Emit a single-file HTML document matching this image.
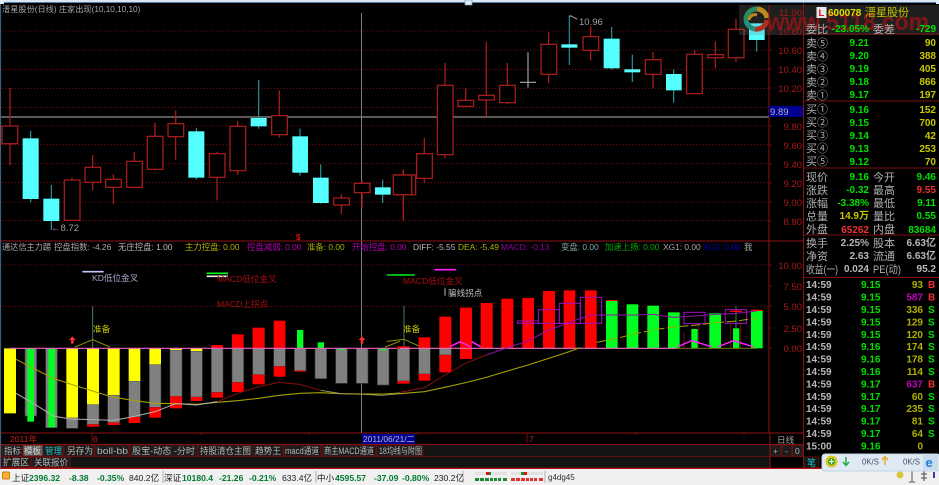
<!DOCTYPE html>
<html><head><meta charset="utf-8"><style>
html,body{margin:0;padding:0;background:#000;width:939px;height:485px;overflow:hidden}
svg{display:block;filter:blur(.3px)}
text{font-family:"Liberation Sans","Noto Sans CJK SC",sans-serif}
.l{font-size:11px;fill:#b0b0b0}
.n{font-size:10px;font-weight:bold}
.gr{fill:#00e000}.y{fill:#c8c800}.r{fill:#f03030}
.t{font-size:10px;font-weight:bold;fill:#b8b8b8}
.lg{font-size:8.4px}
.ax{font-size:9.5px;fill:#a81818;text-anchor:end}
.tb{font-size:9px;fill:#b8b8b8}
.st{font-size:8.6px;font-weight:bold;fill:#007a30}
.sk{font-size:8.6px;fill:#202020}
</style></head><body>
<svg width="939" height="485" viewBox="0 0 939 485" xmlns="http://www.w3.org/2000/svg">
<rect width="939" height="485" fill="#000"/>
<!-- upper dotted grid -->
<path d="M2 31H769M2 50H769M2 69.3H769M2 88.3H769M2 107.3H769M2 126H769M2 144.7H769M2 163.7H769M2 182.7H769M2 202H769M2 220.7H769" stroke="#8a1010" stroke-width=".8" stroke-dasharray="1.2 2"/>
<path d="M0 117H769" stroke="#909090" stroke-width="1.3"/>
<path d="M361.5 13V433" stroke="#808080" stroke-width="1"/>
<!-- candles left -->
<g transform="scale(.33333)">
<g stroke="#a81c1c" stroke-width="3.8" fill="none">
<path d="M30 264V495M216 533V661M278 465V570M340 522V612M403 456V562M465 369V512M527 332V479M651 456V601M713 363V524M838 271V412M1024 583V642M1086 540V626M1210 508V662"/>
<g fill="#000"><rect x="6" y="378" width="47" height="53"/><rect x="193" y="540" width="47" height="121"/><rect x="255" y="502" width="47" height="45"/><rect x="317" y="538" width="47" height="24"/><rect x="380" y="484" width="47" height="78"/><rect x="442" y="409" width="47" height="99"/><rect x="504" y="371" width="47" height="39"/><rect x="628" y="461" width="47" height="71"/><rect x="690" y="379" width="47" height="133"/><rect x="815" y="347" width="47" height="57"/><rect x="1001" y="594" width="47" height="21"/><rect x="1063" y="550" width="47" height="28"/><rect x="1187" y="525" width="60" height="59"/></g>
</g>
<path d="M92 392V607M154 555V690M589 384V539M776 240V386M900 386V527M962 493V611M1148 539V609" stroke="#269a9a" stroke-width="3.4"/>
<g fill="#55ffff"><rect x="68" y="415" width="48" height="182"/><rect x="130" y="596" width="48" height="67"/><rect x="565" y="394" width="48" height="139"/><rect x="752" y="354" width="48" height="25"/><rect x="877" y="409" width="47" height="109"/><rect x="939" y="533" width="47" height="76"/><rect x="1125" y="562" width="47" height="22"/></g>
</g>
<!-- candles right -->
<g transform="translate(400 0) scale(.33333)">
<g stroke="#a81c1c" stroke-width="3.8" fill="none">
<path d="M73 414V548M135 189V474M197 265V322M259 126V351M322 189V312M446 96V250M572 79V182M759 156V264M884 150V281M946 124V205M1008 56V186M10 508V662"/>
<g fill="#000"><rect x="-20" y="525" width="55" height="59"/><rect x="50" y="461" width="47" height="74"/><rect x="112" y="256" width="47" height="208"/><rect x="174" y="301" width="47" height="18"/><rect x="236" y="286" width="47" height="14"/><rect x="299" y="256" width="47" height="52"/><rect x="423" y="133" width="47" height="90"/><rect x="549" y="110" width="47" height="41"/><rect x="736" y="179" width="47" height="44"/><rect x="860" y="163" width="47" height="118"/><rect x="923" y="164" width="47" height="9"/><rect x="985" y="88" width="47" height="85"/></g>
</g>
<path d="M384 157V263M360 247H408" stroke="#a8a8a8" stroke-width="3.4"/>
<path d="M508 47V195M635 81V209M697 164V246M821 208V308M1070 100V155" stroke="#269a9a" stroke-width="3.4"/>
<g fill="#55ffff"><rect x="484" y="133" width="48" height="10"/><rect x="611" y="116" width="48" height="89"/><rect x="673" y="208" width="48" height="9"/><rect x="798" y="222" width="47" height="49"/><rect x="1047" y="70" width="47" height="50"/></g>
<path d="M508 50L512 47L532 58" stroke="#a8a8a8" stroke-width="3" fill="none"/>
</g>
<text x="579" y="25" font-size="9.5" fill="#a0a0a0">10.96</text>
<text x="51" y="231" font-size="9.5" fill="#a0a0a0">←8.72</text>
<text x="296" y="240" font-size="8" fill="#e01010" font-weight="bold">$</text>
<!-- title -->
<text x="2" y="12" font-size="8.2" fill="#a8a8a8">溍星股份(日线) 庄家出现(10,10,10,10)</text>
<!-- watermark -->
<rect x="739" y="5" width="200" height="30" fill="#808080" opacity=".24"/>
<text x="767" y="30" font-size="24" font-weight="bold" fill="#8a1616" opacity=".9" textLength="162" lengthAdjust="spacingAndGlyphs">www.5118.com</text>
<g fill="none" stroke-width="5">
<path d="M746 20a10.500 10.500 0 0 1 11-11" stroke="#2a8a60"/>
<path d="M757 9a10.500 10.500 0 0 1 10 9" stroke="#c08a20"/>
<path d="M767 20a10.500 10.500 0 0 1-12 9" stroke="#b03020"/>
<path d="M755 29a10.500 10.500 0 0 1-9-9" stroke="#209080"/>
</g>
<path d="M749 20a6 6 0 0 1 8-5" stroke="#c08a20" stroke-width="3" fill="none"/>
<!-- axis upper -->
<path d="M769 5V433" stroke="#8e1212" stroke-width="1"/>
<path d="M769 31h3M769 50h3M769 69h3M769 88h3M769 107h3M769 126h3M769 145h3M769 164h3M769 183h3M769 202h3M769 221h3" stroke="#8e1212" stroke-width=".8"/>
<g class="ax">
<text x="802" y="16">11.00</text><text x="802" y="35">10.80</text><text x="802" y="54">10.60</text><text x="802" y="73">10.40</text><text x="802" y="92">10.20</text><text x="802" y="130">9.80</text><text x="802" y="149">9.60</text><text x="802" y="168">9.40</text><text x="802" y="187">9.20</text><text x="802" y="206">9.00</text><text x="802" y="225">8.80</text>
</g>
<rect x="769" y="106" width="34" height="11" fill="#000090"/>
<text x="770" y="115" font-size="9.5" fill="#b0b0c8">9.89</text>
<!-- lower pane grid -->
<path d="M0 241H803" stroke="#8e1212" stroke-width="1"/>
<path d="M2 265H769M2 306.3H769" stroke="#8a1010" stroke-width=".8" stroke-dasharray="1.2 2"/>
<path d="M769 265h3M769 286h3M769 306h3M769 328h3M769 348h3" stroke="#8e1212" stroke-width=".8"/>
<g class="ax"><text x="802" y="269">10.00</text><text x="802" y="290">7.50</text><text x="802" y="310">5.00</text><text x="802" y="332">2.50</text><text x="802" y="352">0.00</text></g>
<!-- legend -->
<g class="lg">
<text x="2" y="250" fill="#a8a8a8" textLength="49" lengthAdjust="spacingAndGlyphs">通达信主力踢</text>
<text x="54" y="250" fill="#a8a8a8">控盘指数: -4.26</text>
<text x="118" y="250" fill="#b8b8b8">无庄控盘: 1.00</text>
<text x="185" y="250" fill="#b0b000">主力控盘: 0.00</text>
<text x="247" y="250" fill="#b000b0">控盘减弱: 0.00</text>
<text x="307" y="250" fill="#a8a800">准备: 0.00</text>
<text x="352" y="250" fill="#b000b0">开始控盘: 0.00</text>
<text x="413" y="250" fill="#b8b8b8">DIFF: -5.55</text>
<text x="458" y="250" fill="#b0b000">DEA: -5.49</text>
<text x="501" y="250" fill="#9000a0">MACD: -0.13</text>
<text x="561" y="250" fill="#80a8a0">变盘: 0.00</text>
<text x="605" y="250" fill="#00b000">加速上扬: 0.00</text>
<text x="663" y="250" fill="#a8a8a8">XG1: 0.00</text>
<text x="703" y="250" fill="#0000c0">XG2: 0.00</text>
<text x="744" y="250" fill="#a8a8a8">我</text>
</g>
<!-- bars left -->
<g transform="translate(0 235) scale(.33333)">
<path d="M278 213V340" stroke="#4a7a60" stroke-width="3"/>
<g fill="#808080" stroke="#3c3c3c" stroke-width="2"><rect x="75" y="340" width="35" height="203"/><rect x="137" y="340" width="35" height="238"/><rect x="199" y="548" width="35" height="32"/><rect x="261" y="508" width="36" height="60"/><rect x="323" y="480" width="36" height="83"/><rect x="386" y="438" width="35" height="108"/><rect x="448" y="388" width="35" height="129"/><rect x="510" y="345" width="36" height="139"/><rect x="572" y="348" width="35" height="138"/><rect x="634" y="340" width="35" height="132"/><rect x="696" y="340" width="35" height="102"/><rect x="758" y="340" width="36" height="79"/><rect x="821" y="340" width="35" height="54"/><rect x="883" y="340" width="35" height="67"/><rect x="945" y="340" width="35" height="91"/><rect x="1007" y="340" width="35" height="105"/><rect x="1069" y="340" width="35" height="105"/><rect x="1132" y="340" width="35" height="110"/><rect x="1194" y="340" width="10" height="98"/></g>
<g fill="#ffff00"><rect x="12" y="340" width="36" height="195"/><rect x="199" y="340" width="35" height="208"/><rect x="261" y="340" width="36" height="168"/><rect x="323" y="340" width="36" height="140"/><rect x="386" y="340" width="35" height="98"/><rect x="448" y="340" width="35" height="48"/><rect x="510" y="340" width="36" height="5"/><rect x="572" y="340" width="35" height="8"/></g>
<g fill="#00ff20"><rect x="82" y="340" width="20" height="220"/><rect x="145" y="340" width="20" height="237"/><rect x="891" y="285" width="19" height="55"/><rect x="953" y="322" width="19" height="18"/><rect x="1015" y="340" width="19" height="5"/><rect x="1140" y="340" width="19" height="6"/></g>
<g fill="#ff0000"><rect x="261" y="568" width="36" height="7"/><rect x="323" y="563" width="36" height="7"/><rect x="386" y="546" width="35" height="18"/><rect x="448" y="517" width="35" height="31"/><rect x="510" y="484" width="36" height="36"/><rect x="572" y="486" width="35" height="12"/><rect x="634" y="472" width="35" height="16"/><rect x="634" y="330" width="35" height="10"/><rect x="696" y="442" width="35" height="29"/><rect x="696" y="298" width="35" height="42"/><rect x="758" y="419" width="36" height="29"/><rect x="758" y="278" width="36" height="62"/><rect x="821" y="394" width="35" height="31"/><rect x="821" y="257" width="35" height="83"/><rect x="883" y="407" width="35" height="3"/></g>
<path d="M30 340H1200" stroke="#f060c0" stroke-width="3.4"/>
<path d="M225 336L278 314L330 336M1155 336L1200 319" stroke="#909000" stroke-width="3" fill="none"/>
<path d="M48 373L100 400L160 430L220 450L262 463L330 484L390 495L465 505L527 506L590 508L651 502L713 497L776 490L838 481L900 475L962 473L1024 476L1086 477L1148 477L1200 474" stroke="#a8a000" stroke-width="3.2" fill="none"/>
<path d="M48 475L100 505L160 543L210 552L280 554L340 556L400 545L465 530L527 506L590 510L651 500" stroke="#b0b0b0" stroke-width="3" fill="none"/>
<path d="M651 500L713 475L776 455L838 442L900 448L962 466" stroke="#8a1010" stroke-width="3" fill="none"/>
<path d="M962 466L1024 476L1086 478L1148 481L1200 476" stroke="#a0a060" stroke-width="2.5" fill="none"/>
<path d="M217 304l-10 11h6v11h8v-11h6zM1086 304l-10 11h6v11h8v-11h6z" fill="#ff3030"/>
<path d="M247 110H311" stroke="#c8c8ff" stroke-width="5"/>
<path d="M620 115H684" stroke="#00ff20" stroke-width="5"/>
<path d="M620 124H684" stroke="#f0f0f0" stroke-width="5"/>
<path d="M1180 120H1222" stroke="#00c020" stroke-width="5"/>
</g>
<!-- bars right -->
<g transform="translate(400 235) scale(.33333)">
<path d="M12 213V340M1008 213V340" stroke="#4a7a60" stroke-width="3"/>
<path d="M895 265V340M992 265V340M1022 265V340M852 290V340" stroke="#701010" stroke-width="3"/>
<g fill="#808080" stroke="#3c3c3c" stroke-width="2"><rect x="-8" y="340" width="37" height="98"/><rect x="56" y="340" width="35" height="77"/><rect x="118" y="340" width="36" height="20"/></g>
<g fill="#ff0000"><rect x="-8" y="438" width="37" height="8"/><rect x="-8" y="334" width="37" height="6"/><rect x="56" y="417" width="35" height="20"/><rect x="56" y="307" width="35" height="33"/><rect x="118" y="360" width="36" height="52"/><rect x="118" y="245" width="36" height="95"/><rect x="180" y="218" width="36" height="154"/><rect x="242" y="204" width="36" height="136"/><rect x="304" y="191" width="36" height="149"/><rect x="367" y="189" width="35" height="151"/><rect x="429" y="168" width="36" height="172"/><rect x="491" y="166" width="35" height="174"/><rect x="555" y="166" width="35" height="174"/><rect x="618" y="195" width="35" height="4"/><rect x="990" y="227" width="36" height="4"/><rect x="1053" y="224" width="35" height="4"/></g>
<g fill="#00ff20"><rect x="618" y="198" width="35" height="142"/><rect x="680" y="208" width="35" height="132"/><rect x="742" y="212" width="35" height="128"/><rect x="804" y="232" width="35" height="108"/><rect x="874" y="282" width="19" height="58"/><rect x="928" y="235" width="35" height="105"/><rect x="999" y="280" width="19" height="60"/><rect x="1053" y="228" width="35" height="112"/></g>
<g stroke="#a010c0" stroke-width="3" fill="none"><rect x="352" y="258" width="63" height="7"/><rect x="415" y="224" width="63" height="41"/><rect x="478" y="205" width="63" height="60"/><rect x="541" y="187" width="64" height="78"/><rect x="852" y="232" width="63" height="34"/><rect x="976" y="224" width="64" height="41"/></g>
<path d="M0 340H830" stroke="#f070c0" stroke-width="3.4"/>
<path d="M830 340H1072" stroke="#707000" stroke-width="3"/>
<path d="M-40 319L12 313L57 333" stroke="#909000" stroke-width="3" fill="none"/>
<path d="M150 335L180 320L212 335M215 320L242 335M833 335L875 317L935 335M955 335L1000 317L1060 335" stroke="#ff20ff" stroke-width="4.500" fill="none"/>
<path d="M0 476L73 470L135 457L197 443L259 427L322 408L384 390L446 370L508 350L540 338" stroke="#a8a000" stroke-width="3.2" fill="none"/>
<path d="M590 322L650 310L710 295L770 283L830 275L890 270L950 263L1010 258L1065 250" stroke="#a8a000" stroke-width="3" stroke-dasharray="28 8" fill="none"/>
<path d="M0 472L73 458L135 420L197 385L259 360" stroke="#8a1010" stroke-width="3" fill="none"/>
<path d="M259 360L322 338L384 318L446 285L508 262L572 240L635 240L697 240L759 238L821 247L884 243L946 238L1008 235L1070 228" stroke="#9010a8" stroke-width="3" fill="none"/>
<path d="M-40 120H44" stroke="#00c020" stroke-width="5"/>
<path d="M103 104H168" stroke="#ff20ff" stroke-width="5"/>
<path d="M135 160V182" stroke="#c0c0c0" stroke-width="3"/>
</g>
<g font-size="8.6">
<text x="92" y="281" fill="#a8a8d0">KD低位金叉</text>
<text x="217" y="282" fill="#a81010">MACD低位金叉</text>
<text x="217" y="307" fill="#a81010">MACD上拐点</text>
<text x="93" y="332" fill="#c8c800">准备</text>
<text x="403" y="284" fill="#a81010">MACD低位金叉</text>
<text x="448" y="296" fill="#c0c0c0">骗线拐点</text>
<text x="403" y="332" fill="#c8c800">准备</text>
</g>
<!-- date row -->
<path d="M0 433H803M0 444.500H803" stroke="#8e1212" stroke-width="1"/>
<path d="M92 433v10M201 433v2M309 433v2M418 433v2M527 433v10M636 433v2M744 433v2" stroke="#8e1212" stroke-width=".8"/>
<text x="10" y="442" font-size="8.6" fill="#c02020">2011年</text>
<text x="93" y="442" font-size="8.6" fill="#c02020">6</text>
<text x="529" y="442" font-size="8.6" fill="#c02020">7</text>
<rect x="362" y="434" width="53" height="10" fill="#000090"/>
<text x="363" y="442" font-size="8.4" fill="#b8b8d0">2011/06/21/二</text>
<!-- tab rows -->
<rect x="0" y="445" width="770" height="23" fill="#141414"/>
<g fill="#1c1c1c" stroke="#6e1010" stroke-width=".8">
<rect x="2" y="445" width="20" height="11"/><rect x="23" y="445" width="20" height="11" fill="#606060"/><rect x="43" y="445" width="20" height="11"/><rect x="64" y="445" width="30" height="11"/><rect x="95" y="445" width="34" height="11"/><rect x="130" y="445" width="67" height="11"/><rect x="198" y="445" width="55" height="11"/><rect x="253" y="445" width="30" height="11"/><rect x="284" y="445" width="37" height="11"/><rect x="322" y="445" width="54" height="11"/><rect x="377" y="445" width="46" height="11"/>
<rect x="2" y="457" width="29" height="10"/><rect x="32" y="457" width="38" height="10"/>
</g>
<path d="M0 456.500H803" stroke="#6e1010" stroke-width=".8"/>
<g class="tb">
<text x="4" y="454" textLength="17" lengthAdjust="spacingAndGlyphs">指标</text>
<text x="24" y="454" textLength="17" lengthAdjust="spacingAndGlyphs" fill="#d0d0d0">模板</text>
<text x="45" y="454" textLength="17" lengthAdjust="spacingAndGlyphs" fill="#20c0c0">管理</text>
<text x="67" y="454" textLength="26" lengthAdjust="spacingAndGlyphs">另存为</text>
<text x="97" y="454" textLength="31" lengthAdjust="spacingAndGlyphs">boll-bb</text>
<text x="132" y="454" textLength="63" lengthAdjust="spacingAndGlyphs">股宝-动态 -分时</text>
<text x="200" y="454" textLength="51" lengthAdjust="spacingAndGlyphs">持股清仓主图</text>
<text x="255" y="454" textLength="26" lengthAdjust="spacingAndGlyphs">趋势王</text>
<text x="285" y="454" textLength="34" lengthAdjust="spacingAndGlyphs">macd通道</text>
<text x="324" y="454" textLength="50" lengthAdjust="spacingAndGlyphs">商主MACD通道</text>
<text x="379" y="454" textLength="43" lengthAdjust="spacingAndGlyphs">18均线与附图</text>
<text x="3" y="465.500" textLength="26" lengthAdjust="spacingAndGlyphs">扩展区</text>
<text x="34" y="465.500" textLength="34" lengthAdjust="spacingAndGlyphs">关联报价</text>
</g>
<!-- right panel -->
<rect x="804" y="0" width="135" height="34" fill="#000" opacity="0"/>
<path d="M803.500 0V468" stroke="#8e1212" stroke-width="1"/>
<path d="M770 433V468" stroke="#8e1212" stroke-width="1"/>
<path d="M803 34H939M803 101H939M803 168H939M803 235H939M803 277.500H939" stroke="#7a1010" stroke-width="1"/>
<text x="777" y="443" font-size="8.600" fill="#a0a0a0">日线</text>
<rect x="770.500" y="445" width="10.500" height="11" fill="#1c1c1c" stroke="#7a1010" stroke-width=".8"/><rect x="781.500" y="445" width="10.500" height="11" fill="#1c1c1c" stroke="#7a1010" stroke-width=".8"/><rect x="792.500" y="445" width="10.500" height="11" fill="#1c1c1c" stroke="#7a1010" stroke-width=".8"/>
<text x="773" y="454" font-size="8.500" fill="#b0b0b0">+</text><text x="785" y="454" font-size="8.500" fill="#b0b0b0">-</text><text x="795" y="454" font-size="8.500" fill="#b0b0b0">0</text>
<rect x="804" y="457" width="15" height="11" fill="#101818" stroke="#7a1010" stroke-width=".8"/>
<text x="807" y="466" font-size="9" fill="#20c0c0">笔</text>
<!-- quote head -->
<rect x="816.500" y="7" width="10" height="11" fill="#e8e8e8"/>
<text x="818.500" y="16" font-size="9.500" font-weight="bold" fill="#e01010">L</text>
<text x="828" y="16" font-size="10" font-weight="bold" fill="#e0e000">600078</text>
<text x="865" y="16" font-size="11" fill="#c8c800">溍星股份</text>
<text x="806" y="33" class="l">委比</text><text x="869" y="32" class="n gr" text-anchor="end">-23.05%</text><text x="873" y="33" class="l">委差</text><text x="936" y="32" class="n gr" text-anchor="end">-729</text>
<g class="l">
<text x="806" y="47">卖⑤</text><text x="806" y="60">卖④</text><text x="806" y="73">卖③</text><text x="806" y="86">卖②</text><text x="806" y="99">卖①</text>
<text x="806" y="113">买①</text><text x="806" y="126">买②</text><text x="806" y="139">买③</text><text x="806" y="152">买④</text><text x="806" y="165">买⑤</text>
<text x="806" y="181">现价</text><text x="806" y="194">涨跌</text><text x="806" y="207">涨幅</text><text x="806" y="220">总量</text><text x="806" y="233">外盘</text>
<text x="873" y="181">今开</text><text x="873" y="194">最高</text><text x="873" y="207">最低</text><text x="873" y="220">量比</text><text x="873" y="233">内盘</text>
<text x="806" y="247">换手</text><text x="806" y="260">净资</text><text x="806" y="273" textLength="32" lengthAdjust="spacingAndGlyphs">收益(一)</text>
<text x="873" y="247">股本</text><text x="873" y="260">流通</text><text x="873" y="273" textLength="28" lengthAdjust="spacingAndGlyphs">PE(动)</text>
</g>
<g class="n gr" text-anchor="end">
<text x="869" y="46">9.21</text><text x="869" y="59">9.20</text><text x="869" y="72">9.19</text><text x="869" y="85">9.18</text><text x="869" y="98">9.17</text>
<text x="869" y="113">9.16</text><text x="869" y="126">9.15</text><text x="869" y="139">9.14</text><text x="869" y="152">9.13</text><text x="869" y="165">9.12</text>
<text x="869" y="180">9.16</text><text x="869" y="193">-0.32</text><text x="869" y="206">-3.38%</text>
<text x="936" y="180">9.46</text><text x="936" y="206">9.11</text><text x="936" y="219">0.55</text><text x="936" y="233">83684</text>
</g>
<g class="n y" text-anchor="end">
<text x="936" y="46">90</text><text x="936" y="59">388</text><text x="936" y="72">405</text><text x="936" y="85">866</text><text x="936" y="98">197</text>
<text x="936" y="113">152</text><text x="936" y="126">700</text><text x="936" y="139">42</text><text x="936" y="152">253</text><text x="936" y="165">70</text>
<text x="869" y="219">14.9万</text>
</g>
<text x="936" y="193" class="n r" text-anchor="end">9.55</text>
<text x="869" y="233" class="n r" text-anchor="end">65262</text>
<g class="t" text-anchor="end">
<text x="869" y="246">2.25%</text><text x="869" y="259">2.63</text><text x="869" y="272">0.024</text>
<text x="936" y="246">6.63亿</text><text x="936" y="259">6.63亿</text><text x="936" y="272">95.2</text>
</g>
<!-- trades -->
<g class="t">
<text x="806" y="288">14:59</text><text x="806" y="300.500">14:59</text><text x="806" y="313">14:59</text><text x="806" y="325.500">14:59</text><text x="806" y="338">14:59</text><text x="806" y="350">14:59</text><text x="806" y="362.500">14:59</text><text x="806" y="375">14:59</text><text x="806" y="387.500">14:59</text><text x="806" y="400">14:59</text><text x="806" y="412">14:59</text><text x="806" y="424.500">14:59</text><text x="806" y="437">14:59</text><text x="806" y="449.500">15:00</text>
</g>
<g class="n gr">
<text x="861" y="288">9.15</text><text x="861" y="300.500">9.15</text><text x="861" y="313">9.15</text><text x="861" y="325.500">9.15</text><text x="861" y="338">9.15</text><text x="861" y="350">9.16</text><text x="861" y="362.500">9.16</text><text x="861" y="375">9.16</text><text x="861" y="387.500">9.17</text><text x="861" y="400">9.17</text><text x="861" y="412">9.17</text><text x="861" y="424.500">9.17</text><text x="861" y="437">9.17</text><text x="861" y="449.500">9.16</text>
</g>
<g class="n" text-anchor="end" fill="#b0b000">
<text x="923" y="288">93</text><text x="923" y="300.500" fill="#c000c0">587</text><text x="923" y="313">336</text><text x="923" y="325.500">129</text><text x="923" y="338">120</text><text x="923" y="350">174</text><text x="923" y="362.500">178</text><text x="923" y="375">114</text><text x="923" y="387.500" fill="#c000c0">637</text><text x="923" y="400">60</text><text x="923" y="412">235</text><text x="923" y="424.500">81</text><text x="923" y="437">64</text><text x="923" y="449.500">0</text>
</g>
<g class="n gr">
<text x="928" y="288" class="r">B</text><text x="928" y="300.500" class="r">B</text><text x="928" y="313">S</text><text x="928" y="325.500">S</text><text x="928" y="338">S</text><text x="928" y="350">S</text><text x="928" y="362.500">S</text><text x="928" y="375">S</text><text x="928" y="387.500" class="r">B</text><text x="928" y="400">S</text><text x="928" y="412">S</text><text x="928" y="424.500">S</text><text x="928" y="437">S</text>
</g>
<!-- status bar -->
<path d="M0 468.300H939" stroke="#b01010" stroke-width="1.300"/>
<rect x="0" y="469" width="939" height="16" fill="#f0f0f0"/>
<rect x="2.500" y="472" width="7" height="7" fill="#ffb030" stroke="#c08010" rx="1"/>
<text x="12" y="481" class="sk" font-size="9">上证</text><text x="29" y="481" class="st">2396.32</text><text x="69" y="481" class="st">-8.38</text><text x="97" y="481" class="st">-0.35%</text><text x="129" y="481" class="sk">840.2亿</text>
<path d="M163 471V483M316 471V483M463 471V483M545 471V483" stroke="#a0a0a0" stroke-width=".8"/>
<text x="164" y="481" class="sk">深证</text><text x="182" y="481" class="st">10180.4</text><text x="219" y="481" class="st">-21.26</text><text x="249" y="481" class="st">-0.21%</text><text x="282" y="481" class="sk">633.4亿</text>
<text x="317" y="481" class="sk">中小</text><text x="335" y="481" class="st">4595.57</text><text x="374" y="481" class="st">-37.09</text><text x="402" y="481" class="st">-0.80%</text><text x="434" y="481" class="sk">230.2亿</text>
<!-- mini bars -->
<path d="M475 473.500h32M511 473.500h32" stroke="#e2e2e2" stroke-width="3"/>
<path d="M475 479.500h4M480 479.500h4M485 479.500h4M490 479.500h3M494 479.500h3M498 479.500h3M503 479.500h4" stroke="#1c8a30" stroke-width="3"/>
<path d="M486 473.500h3" stroke="#e01010" stroke-width="3"/><path d="M489 473.500h2" stroke="#1c8a30" stroke-width="3"/>
<path d="M511 479.500h4M516 479.500h4M521 479.500h4M526 479.500h3M530 479.500h3M534 479.500h3M539 479.500h4" stroke="#e03030" stroke-width="3"/>
<path d="M521 473.500h3" stroke="#1c8a30" stroke-width="3"/><path d="M524 473.500h3" stroke="#e01010" stroke-width="3"/>
<text x="548" y="480" font-size="8" fill="#303030">g4dg45</text>
<!-- tray -->
<circle cx="900" cy="475" r="3.500" fill="#d8c840"/>
<path d="M912 470V482M909 482H915" stroke="#808880" stroke-width="1.500"/>
<path d="M924 471V481M921 474H927M921 478H927" stroke="#606860" stroke-width="1.300"/>
<path d="M934 472V478" stroke="#000090" stroke-width="1.500"/>
<!-- floating widget -->
<rect x="822" y="454" width="118" height="17" rx="3" fill="#dfeaf4" stroke="#c0d4e6"/>
<circle cx="831.500" cy="461.500" r="6" fill="#d8c820"/>
<circle cx="831.500" cy="461.500" r="3.500" fill="#30a030"/>
<path d="M829 461.500h5M831.500 459v5" stroke="#e8f8d0" stroke-width="1.200"/>
<path d="M846 457V465M843 462L846 465.500L849 462" stroke="#20b040" stroke-width="1.500" fill="none"/>
<text x="862" y="464.500" font-size="7.800" fill="#405060">0K/S</text>
<path d="M885 465V457M882 460L885 456.500L888 460" stroke="#f0a830" stroke-width="1.500" fill="none"/>
<text x="903" y="464.500" font-size="7.800" fill="#405060">0K/S</text>
<rect x="923" y="455" width="15" height="15" fill="#c8dcec"/>
<text x="925.500" y="467" font-size="13" font-weight="bold" fill="#2080e0">e</text>
<!-- window chrome -->
<rect x="0" y="0" width="939" height="2" fill="#dce6f0"/>
<path d="M0 2.500H939" stroke="#5080b0" stroke-width="1"/>
<path d="M.5 0V468" stroke="#406080" stroke-width="1.200"/>
<rect x="465" y="0" width="7" height="5" fill="#e0ecf8" stroke="#80a0c0" stroke-width=".7"/>
<rect x="0" y="0" width="4" height="4" fill="#e0ecf8"/>
<rect x="936" y="0" width="3" height="4" fill="#e0ecf8"/>
</svg>
</body></html>
